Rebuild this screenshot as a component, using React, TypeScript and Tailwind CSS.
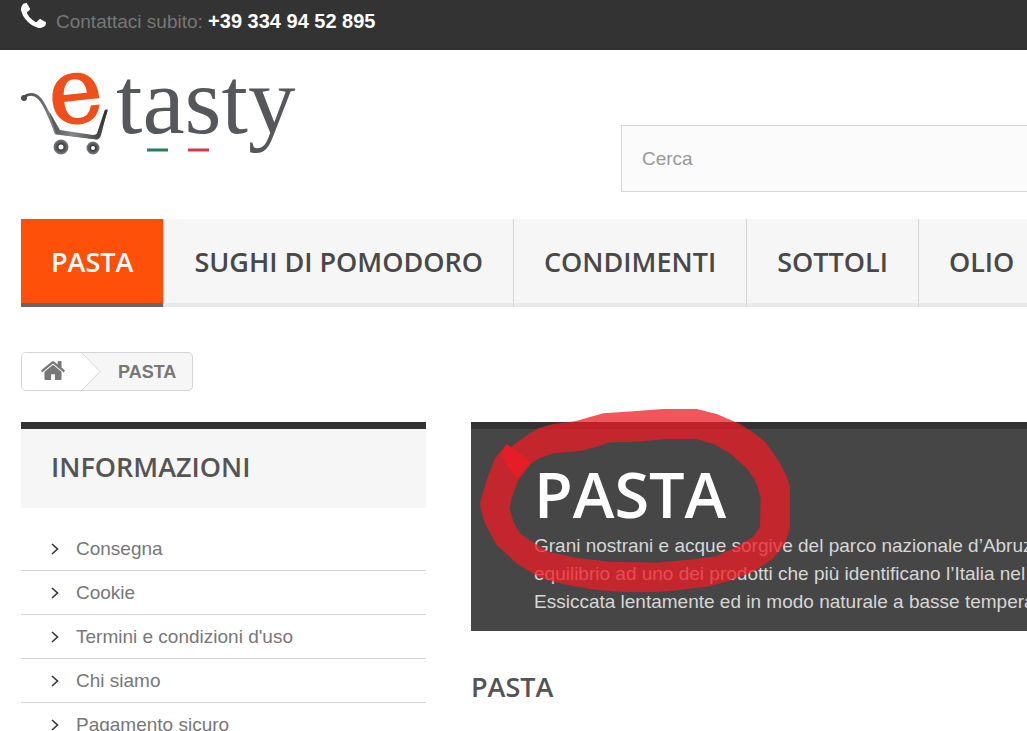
import React from "react";

const navItems = ["PASTA", "SUGHI DI POMODORO", "CONDIMENTI", "SOTTOLI", "OLIO"];

const infoLinks = [
  "Consegna",
  "Cookie",
  "Termini e condizioni d'uso",
  "Chi siamo",
  "Pagamento sicuro",
];

const PhoneIcon: React.FC<{ className?: string }> = ({ className }) => (
  <svg viewBox="192 128 1408 1408" fill="currentColor" className={className}>
    <path d="M1600 1240q0 27-10 70.5t-21 68.5q-21 50-122 106-94 51-186 51-27 0-53-3.5t-57.5-12.5-47-14.5-55.5-20.5-49-18q-98-35-175-83-127-79-264-216t-216-264q-48-77-83-175-3-9-18-49t-20.5-55.5-14.5-47-12.5-57.5-3.5-53q0-92 51-186 56-101 106-122 25-11 68.5-21t70.5-10q14 0 21 3 18 6 53 76 11 19 30 54t35 63.5 31 53.5q3 4 17.5 25t21.5 35.5 7 28.5q0 20-28.5 50t-62 55-62 53-28.5 46q0 9 5 22.5t8.5 20.5 14 24 11.5 19q76 137 174 235t235 174q2 1 19 11.5t24 14 20.5 8.5 22.5 5q18 0 46-28.5t53-62 55-62 50-28.5q14 0 28.5 7t35.5 21.5 25 17.5q25 15 53.5 31t63.5 35 54 30q70 35 76 53 3 7 3 21z" />
  </svg>
);

const HomeIcon: React.FC<{ className?: string }> = ({ className }) => (
  <svg viewBox="90 250 1612 1286" fill="currentColor" className={className}>
    <path d="M1472 992v480q0 26-19 45t-45 19h-384v-384h-256v384h-384q-26 0-45-19t-19-45v-480q0-1 .5-3t.5-3l575-474 575 474q1 2 1 6zm223-69l-62 74q-8 9-21 11h-3q-13 0-21-7l-692-577-692 577q-12 8-24 7-13-2-21-11l-62-74q-8-10-7-23.5t11-21.5l719-599q32-26 76-26t76 26l244 204v-195q0-14 9-23t23-9h192q14 0 23 9t9 23v408l219 182q10 8 11 21.5t-7 23.5z" />
  </svg>
);

const Logo: React.FC = () => (
  <svg viewBox="0 0 280 104" className="h-[104px] w-[280px]" role="img" aria-label="etasty">
    <defs>
      <linearGradient id="cart" x1="0" x2="1">
        <stop offset="0" stopColor="#4a4c4f" />
        <stop offset="0.4" stopColor="#85878a" />
        <stop offset="1" stopColor="#2f3133" />
      </linearGradient>
      <radialGradient id="wheel">
        <stop offset="0.3" stopColor="#333537" />
        <stop offset="1" stopColor="#7b7d80" />
      </radialGradient>
    </defs>
    <path
      d="M3 33C7 30 13 29 18 34C25 41 30 56 35 69L76 74L85 47"
      fill="none"
      stroke="url(#cart)"
      strokeWidth="3"
      strokeLinecap="round"
      strokeLinejoin="round"
    />
    <circle cx="3" cy="34" r="3" fill="#4a4c4f" />
    <path d="M28 47L39 66L72 71C76 71 78 68 79 64L87 44L80 71C79 75 77 76 73 75L35 70Z" fill="url(#cart)" />
    <path
      fillRule="evenodd"
      fill="url(#wheel)"
      d="M32.500 83a7.500 7.500 0 1 0 15 0a7.500 7.500 0 1 0 -15 0ZM37.500 83a2.500 2.500 0 1 0 5 0a2.500 2.500 0 1 0 -5 0Z"
    />
    <path
      fillRule="evenodd"
      fill="url(#wheel)"
      d="M65.500 84a6.500 6.500 0 1 0 13 0a6.500 6.500 0 1 0 -13 0ZM70 84a2 2 0 1 0 4 0a2 2 0 1 0 -4 0Z"
    />
    <text
      x="28"
      y="58"
      transform="rotate(-6 57 35)"
      fontFamily="DejaVu Serif, serif"
      fontSize="91"
      fill="#ef4f1b"
      stroke="#ef4f1b"
      strokeWidth="2"
    >
      e
    </text>
    <text x="95" y="69" fontFamily="Liberation Serif, serif" fontSize="95" fill="#55575a">
      tasty
    </text>
    <path d="M126 86H147" stroke="#23805a" strokeWidth="3" />
    <path d="M167 86H188" stroke="#d6364c" strokeWidth="3" />
  </svg>
);

const TopBar: React.FC = () => (
  <div className="flex h-[50px] items-start gap-[10px] bg-[#333] pl-[21px] text-[19px] leading-6 text-[#777]">
    <PhoneIcon className="mt-[3px] h-[25px] w-[25px] text-white" />
    <p className="mt-[9px]">
      Contattaci subito:{" "}
      <a href="tel:+393349452895" className="text-[20px] font-bold text-white">
        +39 334 94 52 895
      </a>
    </p>
  </div>
);

const Nav: React.FC = () => (
  <nav className="mt-[27px] ml-[21px] overflow-hidden bg-[#f6f6f6]">
    <ul className="flex font-['Open_Sans',sans-serif] text-[27px] leading-9 font-semibold whitespace-nowrap">
      {navItems.map((item, index) => (
        <li key={item} className="flex-none border-r border-[#d6d4d4]">
          <a
            href="#"
            className={
              index === 0
                ? "block border-b-4 border-[#666] bg-[#fe5009] px-[30px] pt-[25px] pb-[23px] text-white"
                : "block border-b-4 border-[#e9e9e9] px-[30px] pt-[25px] pb-[23px] text-[#484848]"
            }
          >
            {item}
          </a>
        </li>
      ))}
    </ul>
  </nav>
);

const Breadcrumb: React.FC = () => (
  <nav className="mt-[45px] ml-[21px] flex">
    <div className="flex h-[39px] items-center overflow-hidden rounded-[5px] border border-[#d6d4d4] bg-[#f6f6f6] text-[#777]">
      <a href="#" aria-label="Home" className="flex h-full items-center bg-white pr-[17px] pl-[19px]">
        <HomeIcon className="mb-[3px] h-[19px] w-6" />
      </a>
      <svg viewBox="0 0 19 37" className="h-[37px] w-[19px]">
        <path d="M0 0L18 18.500L0 37Z" fill="#fff" />
        <path d="M0 0L18 18.500L0 37" fill="none" stroke="#d6d4d4" />
      </svg>
      <span className="pr-4 pl-[17px] text-[18px] leading-6 font-bold">PASTA</span>
    </div>
  </nav>
);

const Sidebar: React.FC = () => (
  <aside className="w-[405px] flex-none">
    <h2 className="border-t-[7px] border-[#333] bg-[#f6f6f6] px-[30px] pt-5 pb-[23px] font-['Open_Sans',sans-serif] text-[27px] leading-9 font-semibold text-[#555454]">
      INFORMAZIONI
    </h2>
    <ul className="mt-[19px] text-[19px] leading-6 text-[#777]">
      {infoLinks.map((link) => (
        <li key={link} className="border-b border-[#d6d4d4]">
          <a href="#" className="flex h-[43px] items-center gap-[17px] pl-[30px]">
            <svg viewBox="0 0 8 12" className="h-3 w-2" fill="none" stroke="#333" strokeWidth="1.6">
              <path d="M1 1L6.500 6L1 11" />
            </svg>
            {link}
          </a>
        </li>
      ))}
    </ul>
  </aside>
);

// hand-drawn highlighter ring around the category title
const Marker: React.FC = () => (
  <svg
    viewBox="0 0 1050 720"
    className="pointer-events-none absolute -top-[29px] -left-[11px] h-[240px] w-[350px]"
    fill="#ed1c24"
    fillOpacity="0.75"
  >
    <path
      fillRule="evenodd"
      d="M140 132L152 142L180 120L235 85L280 72L345 64L430 40L520 34L610 27L710 27L770 42L840 72L880 98L915 125L935 152L960 190L978 225L990 260L990 385L975 430L940 475L880 515L800 545L740 560L630 573L560 577L480 575L410 570L350 560L285 547L235 530L170 490L110 435L75 370L63 330L60 310L80 240L105 175Z
      M175 240L215 188L245 172L280 160L360 153L400 143L450 127L530 125L620 117L710 117L760 132L810 160L860 205L885 240L902 290L900 380L880 410L830 440L770 468L700 478L590 488L450 485L350 474L265 455L200 415L180 400L160 365L148 325L158 285Z"
    />
    <path d="M140 132L185 163L212 187L170 237L120 165Z" />
  </svg>
);

const Category: React.FC = () => (
  <main className="min-w-0 flex-1">
    <section className="relative border-t-[7px] border-[#333] bg-[#464646] pt-[29px] pb-[15px] pl-[63px]">
      <h1 className="mb-[2px] font-['Open_Sans',sans-serif] text-[63px] leading-[72px] font-semibold text-white">
        PASTA
      </h1>
      <p className="text-[19px] leading-7 whitespace-nowrap text-[#d7d7d7]">
        Grani nostrani e acque sorgive del parco nazionale d’Abruzzo
        <br />
        equilibrio ad uno dei prodotti che più identificano l’Italia nel
        <br />
        Essiccata lentamente ed in modo naturale a basse temperature
      </p>
      <Marker />
    </section>
    <h2 className="mt-[38px] font-['Open_Sans',sans-serif] text-[27px] leading-9 font-semibold text-[#555454]">
      PASTA
    </h2>
  </main>
);

export default function App() {
  return (
    <div className="h-screen overflow-hidden bg-white font-['Liberation_Sans',Arial,sans-serif]">
      <TopBar />
      <header className="flex items-start pt-[14px] pl-[21px]">
        <div className="w-[600px] flex-none">
          <a href="#" className="inline-block align-top">
            <Logo />
          </a>
        </div>
        <form className="mt-[61px] flex-1">
          <input
            type="text"
            aria-label="Cerca"
            placeholder="Cerca"
            className="block h-[67px] w-full border border-r-0 border-[#d6d4d4] bg-[#fbfbfb] px-5 text-[19px] leading-6 placeholder:text-[#999]"
          />
        </form>
      </header>
      <Nav />
      <Breadcrumb />
      <div className="mt-[31px] flex gap-[45px] pl-[21px]">
        <Sidebar />
        <Category />
      </div>
    </div>
  );
}
